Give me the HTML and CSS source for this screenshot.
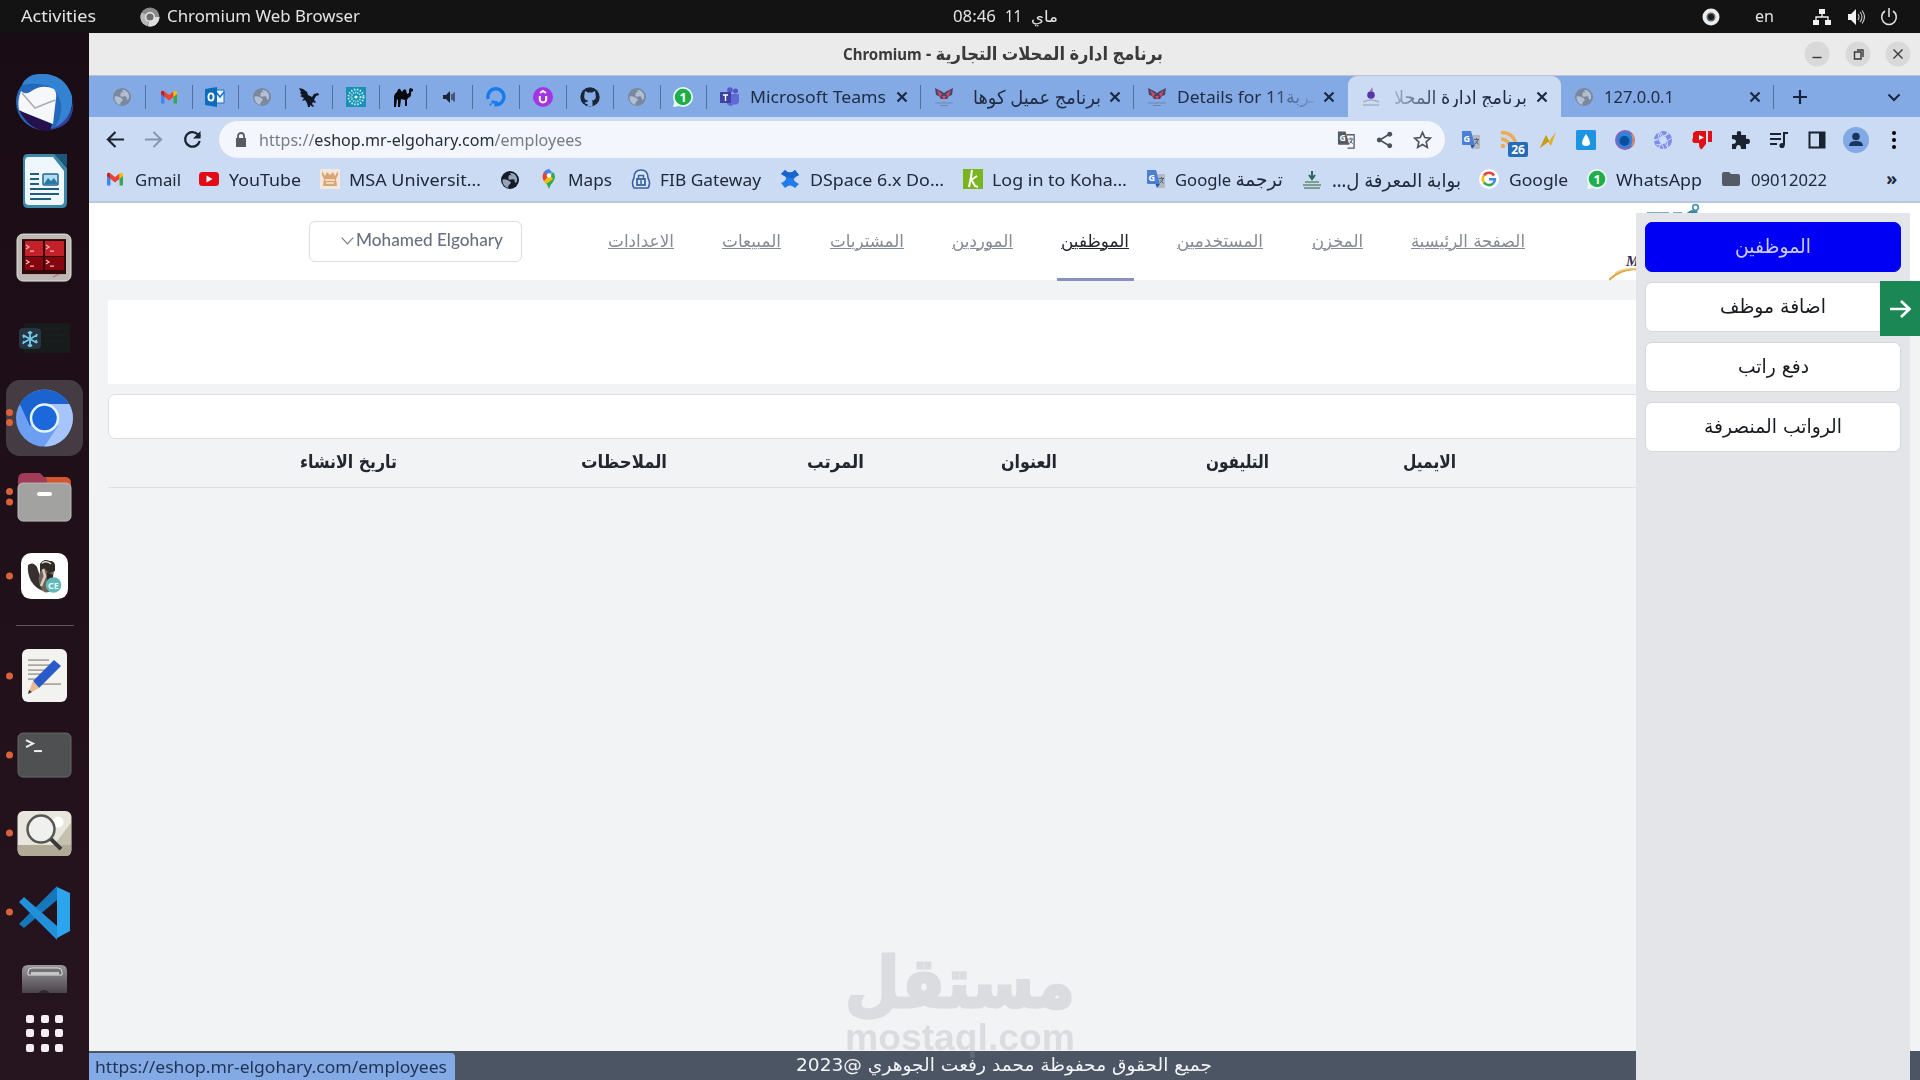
FILE: index.html
```html
<!DOCTYPE html>
<html lang="ar">
<head>
<meta charset="utf-8">
<title>برنامج ادارة المحلات التجارية</title>
<link rel="stylesheet" href="styles.css">
</head>
<body>
<svg class="defs" width="0" height="0">
  <defs>
    <symbol id="globe" viewBox="0 0 20 20"><circle cx="10" cy="10" r="9" fill="currentColor"/><path d="M2.500 9.500q3-.5 5 .5t3 2-1 2.500-1 3.500Q2 16 2.500 9.500zM10 3q5-.5 7 5 .5 3-1 5-1.500-.5-1.500-2.500T11 9.500 8.500 7 11 5.500 10 3z" fill="#c3d1e8" opacity=".75"/></symbol>
    <symbol id="gmail" viewBox="0 0 20 20"><path d="M2 16.500V6h3.500v10.500z" fill="#4285f4"/><path d="M14.500 16.500V6H18v10.500z" fill="#34a853"/><path d="M5.500 10V4.500L10 8l4.500-3.500V10L10 13.500z" fill="#ea4335"/><path d="M2 7V5.500C2 3.500 4 3 5.500 4.500V10z" fill="#c5221f"/><path d="M18 7V5.500c0-2-2-2.500-3.500-1V10z" fill="#fbbc04"/></symbol>
    <symbol id="whats" viewBox="0 0 20 20"><circle cx="10" cy="10" r="10" fill="#e8fbef"/><path d="M0 20l1.500-6 5 5z" fill="#e8fbef"/><circle cx="10" cy="10" r="8.300" fill="#1fae4b"/><text x="10" y="14.500" font-size="12.500" font-weight="700" text-anchor="middle" fill="#fff">1</text></symbol>
    <symbol id="fox" viewBox="0 0 20 20"><path d="M1 1l6 3 3 2 3-2 6-3-1 7-3 1-2 3H7L5 9 2 8z" fill="#4d4468"/><path d="M3 3l5 4-2 3zM17 3l-5 4 2 3zM8 9h4l-2 4z" fill="#e0485b"/><path d="M1 16h18M6 18.500h8" stroke="#7583a0" stroke-width="1"/></symbol>
    <symbol id="translate" viewBox="0 0 20 20"><path d="M8 5h10q1 0 1 1v12q0 1-1 1h-6z" fill="#b3b9c2"/><path d="M1 1h9l4 14H2q-1 0-1-1z" fill="#4a7fd6"/><path d="M9.500 15H14l-3 4z" fill="#2a56a8"/><text x="2.500" y="11.500" font-size="9" font-weight="700" fill="#fff">G</text><path d="M13 9.500h5M15.500 8v1.500M17 9.500q-.5 3-3 4.500M14.500 11l3 3.500" stroke="#566070" fill="none"/></symbol>
    <symbol id="x" viewBox="0 0 14 14"><path d="M2.500 2.500l9 9M11.500 2.500l-9 9" stroke="#1d2940" stroke-width="2.200"/></symbol>
  </defs>
</svg>

<header class="topbar">
  <span class="fit act" data-w="75">Activities</span>
  <svg class="i20" viewBox="0 0 20 20"><circle cx="10" cy="10" r="9.500" fill="#8b8b8b"/><path d="M1.500 5.500L10 10l-3 9A9.500 9.500 0 0 1 1.500 5.500z" fill="#b8b8b8"/><path d="M10 10h9.500A9.500 9.500 0 0 1 8 19.300z" fill="#dedede"/><circle cx="10" cy="10" r="4.300" fill="#6c6c6c" stroke="#e9e9e9" stroke-width="1.400"/></svg>
  <span class="fit app" data-w="193">Chromium Web Browser</span>
  <span class="clock"><span class="fit" data-w="43">08:46</span><span class="fit" data-w="17">11</span><span class="fit" data-w="27">ماي</span></span>
  <svg class="rec" viewBox="0 0 18 18"><circle cx="9" cy="9" r="8.500" fill="#ececec"/><circle cx="9" cy="9" r="4.500" fill="#5e6870"/><circle cx="9" cy="9" r="3" fill="#141d22"/></svg>
  <span class="fit lang" data-w="19">en</span>
  <svg class="net" viewBox="0 0 18 18"><path d="M6 1h6v5H6zM0 12h6v5H0zM12 12h6v5h-6z" fill="#f1f1f1"/><path d="M9 6v3M3 12V9h12v3" stroke="#f1f1f1" stroke-width="1.300" fill="none"/></svg>
  <svg class="vol" viewBox="0 0 18 18"><path d="M1 6h3l5-5v16l-5-5H1z" fill="#f1f1f1"/><path d="M11 6q2 3 0 6M13 4q4 5 0 10M15 2.500q5 6.500 0 13" stroke="#c9c9c9" fill="none" stroke-width="1.100"/></svg>
  <svg class="pow" viewBox="0 0 18 18"><path d="M5 3a7.300 7.300 0 1 0 8 0M9 0v9" stroke="#e6e6e6" fill="none" stroke-width="1.500"/></svg>
</header>

<div class="desk">
<aside class="dock">
  <svg viewBox="0 0 89 79"><circle cx="44" cy="41" r="28" fill="#2468bb"/><path d="M22 24q4-10 16-11 26-2 34 22 2 22-18 33 12-18 4-34-8-15-36-10z" fill="#3383d2"/><path d="M49 69q24-9 24-31 3 28-24 31z" fill="#363f9f"/><path d="M19 49l9 4 24 10-2 7q-20 1-31-21z" fill="#25104b"/><path d="M21 30q4 4 9 1 12-9 24-3 3 4 2 9l-3 26-30-12-4-2q-2-9 2-19z" fill="#f5f7f8"/><path d="M22 32l13 15 20-8" fill="none" stroke="#a9acb4" stroke-width="1.500"/></svg>
  <svg viewBox="0 0 89 79"><path d="M28 14h27l12 14v35q0 5-5 5H28q-5 0-5-5V19q0-5 5-5z" fill="#3d87a8"/><path d="M29 17h24l11 14v30q0 4-4 4H29q-4 0-4-4V21q0-4 4-4z" fill="#eef7fb"/><path d="M54 14h13v13z" fill="#1c5779"/><path d="M30 34h9M30 39h9M30 44h9M30 49h29M30 54h29M30 59h21" stroke="#205d7e" stroke-width="2"/><rect x="43" y="34" width="15" height="11" rx="1" fill="#b2dcef" stroke="#27658a" stroke-width="1.500"/><path d="M44 44l4-6 3 3 3-3 4 6z" fill="#2a77a4"/></svg>
  <svg viewBox="0 0 89 79"><rect x="17" y="15" width="54" height="47" rx="6" fill="#bdbab5" stroke="#e1dfda"/><rect x="22" y="20" width="44" height="35" fill="#320a0d"/><path d="M25 22h18v15H25zM45 22h19v15H45z" fill="#c3202a"/><path d="M25 38h18v13H25zM45 38h19v13H45z" fill="#85060d"/><path d="M26 26l3 2-3 2m4 2h4M46 26l3 2-3 2m4 2h4M26 41l3 2-3 2m4 2h4M46 41l3 2-3 2m4 2h4" stroke="#e9b9b9" stroke-width="1.300" fill="none"/><path d="M53 58l6-3" stroke="#d4545c"/></svg>
  <svg viewBox="0 0 89 79"><rect x="24" y="25" width="46" height="30" fill="#171b1c"/><path d="M44 31h17M44 37h22M44 43h18" stroke="#202424"/><rect x="19" y="30" width="22" height="21" rx="4" fill="#253542"/><path d="M30 33v16M23 37l14 8M23 45l14-8M28 34l2 2 2-2M28 48l2-2 2 2M24 40l-1-3M36 42l1 3M24 43l-1 3M36 39l1-3" stroke="#71c6e7" stroke-width="1.800" fill="none"/></svg>
  <svg viewBox="0 0 89 79"><rect x="6" y="2" width="77" height="76" rx="14" fill="#443c42"/><circle cx="44.500" cy="40" r="28.500" fill="#6c9ff2"/><path d="M19.800 26A28.500 28.500 0 0 1 69.200 26H44.500L30 48z" fill="#1b63cf"/><path d="M44.500 26h24.700A28.500 28.500 0 0 1 44.500 68.500L58 48z" fill="#a7c5fb"/><circle cx="44.500" cy="40" r="13.500" fill="#1b68dc" stroke="#e2f3fd" stroke-width="2.500"/><g class="dot"><circle cx="9.500" cy="34.500" r="3.500"/><circle cx="9.500" cy="44.500" r="3.500"/></g></svg>
  <svg viewBox="0 0 89 79"><path d="M18 23q0-7 6-7h16l4 4h21q6 0 6 7v20H18z" fill="#a23b55"/><path d="M46 20h19q6 0 6 7v10H50z" fill="#d5552d"/><rect x="18" y="26" width="53" height="38" rx="5" fill="#a2a2a1" stroke="#bbb"/><path d="M39 37h11" stroke="#fff" stroke-width="4" stroke-linecap="round"/><g class="dot"><circle cx="9.500" cy="34.500" r="3.500"/><circle cx="9.500" cy="45" r="3.500"/></g></svg>
  <svg viewBox="0 0 89 79"><rect x="21" y="17" width="47" height="46" rx="10" fill="#fefefe"/><path d="M28 29q5-4 9 2l4 12 3 12q-8-2-13-10-4-8-3-16z" fill="#38302f"/><path d="M42 26q8-4 13 3l-2 12-2 14q-7 4-10-3-4-8-1-16z" fill="#6e6156"/><path d="M40 28q4-6 9-3 5-1 6 4v6l-6 2-5-5-4 4z" fill="#312b28"/><path d="M47 36l6 3v10l-6 5z" fill="#2e2725"/><path d="M43 33l2 7-4 10" stroke="#dccabe" stroke-width="2.500" fill="none"/><path d="M42 27q5-3 9 1" stroke="#e8ddd4" stroke-width="1.500" fill="none"/><circle cx="53.500" cy="49" r="7.800" fill="#64b8ba"/><text x="53.500" y="52.500" font-size="9" font-weight="700" text-anchor="middle" fill="#e1ffff">CE</text><g class="dot"><circle cx="9.500" cy="40" r="3.500"/></g></svg>
  <hr>
  <svg viewBox="0 0 89 79"><rect x="22" y="13" width="45" height="53" rx="6" fill="#f2f2f1"/><path d="M28 24h21M28 29h27M28 34h27M28 38h20M28 43h15M40 48h21" stroke="#aaa79d" stroke-width="1.700"/><path d="M54 24l7 6-22 22-6-7z" fill="#2a59c9"/><path d="M33 45l6 7-11 6z" fill="#eab98d"/><path d="M29 54l3 2-4 2z" fill="#333"/><g class="dot"><circle cx="9.500" cy="40" r="3.500"/></g></svg>
  <svg viewBox="0 0 89 79"><rect x="18" y="18" width="53" height="44" rx="5" fill="#4e5051" stroke="#676767"/><path d="M26 25l7 3.500-7 3.500" stroke="#eee" stroke-width="2" fill="none"/><path d="M34 36h8" stroke="#eee" stroke-width="2"/><g class="dot"><circle cx="9.500" cy="40" r="3.500"/></g></svg>
  <svg viewBox="0 0 89 79"><rect x="17.500" y="17" width="54" height="45" rx="6" fill="#e7e5dc"/><path d="M71 29L54 51h17z" fill="#c4c1b0"/><path d="M18 51h53v6q0 5-5 5H23q-5 0-5-5z" fill="#b1aa96"/><circle cx="58" cy="28" r="5.500" fill="#fff"/><circle cx="41" cy="35" r="13.500" fill="#f0f0ee" stroke="#575753" stroke-width="2.500"/><path d="M51 45l10 10" stroke="#393936" stroke-width="4"/><g class="dot"><circle cx="9.500" cy="39" r="3.500"/></g></svg>
  <svg viewBox="0 0 89 79"><path d="M19 51l38-38v14L24 55z" fill="#1478ba"/><path d="M19 29l5-5 33 29v14z" fill="#2190d8"/><path d="M57 14l13 6v38l-13 7z" fill="#2da5ee"/><g class="dot"><circle cx="9.500" cy="39" r="3.500"/></g></svg>
  <svg class="trash" viewBox="0 0 89 41"><defs><linearGradient id="tg" x2="0" y2="1"><stop stop-color="#9b999c"/><stop offset="1" stop-color="#4b434b"/></linearGradient></defs><path d="M22 40V18q0-6 6-6h33q6 0 6 6v22z" fill="url(#tg)"/><path d="M28 22v-3q0-4 4-4h26q4 0 4 4v3z" fill="#737274" stroke="#ddd"/><path d="M31 19h28v3H31z" fill="#c5c5c5"/><path d="M38 40q6-6 12 0z" fill="#312a31"/></svg>
  <div class="grid"><i></i><i></i><i></i><i></i><i></i><i></i><i></i><i></i><i></i></div>
</aside>

<main class="window">
  <div class="title"><b class="fit" data-w="320" dir="rtl">برنامج ادارة المحلات التجارية - <span>Chromium</span></b>
    <div class="wbtns">
      <svg viewBox="0 0 26 26"><circle cx="13" cy="13" r="12.500"/><path d="M8.500 16.500h9"/></svg>
      <svg viewBox="0 0 26 26"><circle cx="13" cy="13" r="12.500"/><path d="M9.500 11h6.500v7H9.500zM12 9h6v7"/></svg>
      <svg viewBox="0 0 26 26"><circle cx="13" cy="13" r="12.500"/><path d="M8.500 8.500l9 9M17.500 8.500l-9 9" stroke-width="1.800"/></svg>
    </div>
  </div>

  <div class="tabs">
    <div class="pin gray"><svg><use href="#globe"/></svg></div>
    <div class="pin"><svg><use href="#gmail"/></svg></div>
    <div class="pin"><svg viewBox="0 0 20 20"><path d="M11 3h8v13h-8z" fill="#e8f2fd" stroke="#1470c4"/><path d="M11 5l4 5 4-5" fill="none" stroke="#1470c4" stroke-width="1.500"/><path d="M0 2l12-2v20L0 18z" fill="#0f6cbd"/><ellipse cx="6" cy="10" rx="2.600" ry="3.600" fill="none" stroke="#fff" stroke-width="1.800"/></svg></div>
    <div class="pin gray"><svg><use href="#globe"/></svg></div>
    <div class="pin"><svg viewBox="0 0 20 20"><path d="M0 1l4 1 4 3 1 3 4 2 2-3 4-1 1 2-3 1-2 4 2 2-1 1-2-1-1 2 2 2-1 1-3-2v2h-2l-1-4-2-3-3 1 2-3-4-2 2-1-2-2 1-1z" fill="#101725"/></svg></div>
    <div class="pin"><svg viewBox="0 0 20 20"><rect width="20" height="20" fill="#1a91b4"/><circle cx="10" cy="10" r="7.500" fill="none" stroke="#bcf0f5" stroke-width="2" stroke-dasharray="1.500 1.500"/><circle cx="10" cy="10" r="4.500" fill="none" stroke="#bcf0f5" stroke-width="2" stroke-dasharray="1 1.200"/><circle cx="10" cy="10" r="1.600" fill="#e6ffff"/></svg></div>
    <div class="pin"><svg viewBox="0 0 20 20"><path d="M1 9q1-3 3-4 1-4 3-3l2 3q2-4 4-2l1 4 2-1V3l1-2 3 1v2l-2 1q1 5-3 6l-1 2v6h-2v-6l-4-1-1 8H5v-7l-1-1-1 8H1v-7z" fill="#05080c"/></svg></div>
    <div class="pin"><svg viewBox="0 0 20 20"><path d="M4 8h3l4-4v12l-4-4H4z" fill="#1a2435"/><path d="M13 7v6M15 5.500v9" stroke="#1a2435" stroke-width="1.200"/></svg></div>
    <div class="pin"><svg viewBox="0 0 20 20"><path d="M2.200 12A8 8 0 1 1 10 17.800V14" fill="none" stroke="#167bee" stroke-width="3.400"/><path d="M5.500 13.500h3v3h-3zM3.500 16.500h2v2h-2z" fill="#167bee"/></svg></div>
    <div class="pin"><svg viewBox="0 0 20 20"><circle cx="10" cy="10" r="10" fill="#a435e2"/><path d="M6.800 9v3.500a3.200 3 0 0 0 6.400 0V9M7 6l3-2 3 2" fill="none" stroke="#fff" stroke-width="2"/></svg></div>
    <div class="pin"><svg viewBox="0 0 20 20"><circle cx="10" cy="10" r="9.700" fill="#182638"/><path d="M5 4l3 1.500h4L15 4l.5 3q1.500 6-3.500 6.500l.5 1.500v4.500h-5V17q-2 .5-3-1.500 2 0 3-1l.5-1Q3 13 4.500 7z" fill="#86ace7"/></svg></div>
    <div class="pin gray"><svg><use href="#globe"/></svg></div>
    <div class="pin"><svg><use href="#whats"/></svg></div>
    <div class="tab"><svg viewBox="0 0 20 20"><circle cx="15.500" cy="4" r="2.500" fill="#5157bd"/><circle cx="10" cy="3" r="2.800" fill="#565cc6"/><path d="M8 7h11v8q-2 4-5 2-3 4-7 0z" fill="#6269d6"/><rect y="5" width="11" height="11" fill="#3c43a4"/><path d="M3 8h5M5.500 8v6" stroke="#fff" stroke-width="1.400"/></svg><span class="txt"><span class="fit" data-w="136">Microsoft Teams</span></span><svg class="cl"><use href="#x"/></svg></div>
    <div class="tab"><svg><use href="#fox"/></svg><span class="txt end"><span class="fit big" data-w="128" dir="rtl">برنامج عميل كوها</span></span><svg class="cl"><use href="#x"/></svg></div>
    <div class="tab nosep"><svg><use href="#fox"/></svg><span class="txt fr"><span class="fit" data-w="138">Details for 11ـربة</span></span><svg class="cl"><use href="#x"/></svg></div>
    <div class="tab active"><svg viewBox="0 0 20 20"><circle cx="10" cy="8" r="3.800" fill="#5438a8"/><path d="M9 4l2-4 1 4" fill="#b46ba5"/><path d="M2 15q8-4 16 0M2 18h16" stroke="#aab0c3" stroke-width="1.500" fill="none"/></svg><span class="txt fl"><span class="fit big" data-w="133" dir="rtl">برنامج ادارة المحلا</span></span><svg class="cl"><use href="#x"/></svg></div>
    <div class="tab gray"><svg><use href="#globe"/></svg><span class="txt"><span class="fit" data-w="70">127.0.0.1</span></span><svg class="cl"><use href="#x"/></svg></div>
    <svg class="plus" viewBox="0 0 16 16"><path d="M8 1v14M1 8h14" stroke="#18243a" stroke-width="2.200"/></svg>
    <svg class="down" viewBox="0 0 14 14"><path d="M1.500 4.500L7 10l5.500-5.500" fill="none" stroke="#18243a" stroke-width="2"/></svg>
  </div>

  <div class="toolbar">
    <svg class="nv" viewBox="0 0 20 20"><path d="M19 10H2.500M10 2l-8 8 8 8" fill="none" stroke="#1d2430" stroke-width="2.300"/></svg>
    <svg class="nv" viewBox="0 0 20 20"><path d="M1 10h16.500M10 2l8 8-8 8" fill="none" stroke="#8794ab" stroke-width="2.100"/></svg>
    <svg class="nv" viewBox="0 0 20 20"><path d="M17.500 11.500a7.700 7.700 0 1 1-2-7L18 7" fill="none" stroke="#1d2430" stroke-width="2.400"/><path d="M18.500 1v8h-8z" fill="#1d2430"/></svg>
    <div class="omni">
      <svg class="lock" viewBox="0 0 12 16"><path d="M1 6h10v9H1z" fill="#555c66"/><path d="M3 6V4a3 3 0 0 1 6 0v2" fill="none" stroke="#555c66" stroke-width="1.800"/></svg>
      <span class="fit url" data-w="323"><i>https://</i>eshop.mr-elgohary.com<i>/employees</i></span>
      <svg class="o1" viewBox="0 0 20 20"><path d="M10 4.500h8v14h-7" fill="none" stroke="#555c66" stroke-width="1.400"/><path d="M1 1h8l4 14H2q-1 0-1-1z" fill="#555c66"/><text x="2.500" y="11.500" font-size="9" font-weight="700" fill="#fff">G</text><path d="M12 9h5M14.500 7.500V9M16 9q-.5 3-3 5M13.500 11l3 3" stroke="#555c66" fill="none"/></svg>
      <svg viewBox="0 0 20 20"><path d="M15 4L5 10l10 6" fill="none" stroke="#4b525c" stroke-width="1.700"/><circle cx="15.500" cy="4" r="2.600" fill="#4b525c"/><circle cx="4.500" cy="10" r="2.600" fill="#4b525c"/><circle cx="15.500" cy="16" r="2.600" fill="#4b525c"/></svg>
      <svg viewBox="0 0 20 20"><path d="M10 2l2.400 5.400 5.900.6-4.400 4 1.200 5.800L10 14.800l-5.100 3L6.100 12 1.700 8l5.900-.6z" fill="none" stroke="#4b525c" stroke-width="1.700"/></svg>
    </div>
    <div class="ext">
      <svg><use href="#translate"/></svg>
      <span class="rss"><svg viewBox="0 0 20 20"><path d="M2 2.500q14 0 15.500 15M2 9q8 0 9 9" stroke="#edaa57" stroke-width="3.400" fill="none"/><circle cx="4" cy="16" r="2.200" fill="#edaa57"/></svg><b>26</b></span>
      <svg viewBox="0 0 20 20"><path d="M2 18L8 5l3 6 7-9-5 14-3-4z" fill="#e0b02b"/><path d="M8 5l3 6-1 1-8 6z" fill="#c89a1c"/></svg>
      <svg viewBox="0 0 20 20"><rect width="20" height="20" rx="1.500" fill="#1d94e2"/><path d="M10 4q8 12 0 12t0-12z" fill="#fff"/></svg>
      <svg viewBox="0 0 20 20"><circle cx="10" cy="10" r="9" fill="#2f83d8" stroke="#8764bd" stroke-width="2"/><circle cx="9.500" cy="11" r="5" fill="#0b4f9c"/><path d="M17 4q3 6 0 12" stroke="#e18869" stroke-width="2" fill="none"/></svg>
      <svg viewBox="0 0 20 20"><circle cx="10" cy="10" r="6.500" fill="none" stroke="#7f8de8" stroke-width="5" stroke-dasharray="5.800 1"/><path d="M7 1l3 5 6-2M19 8l-5 3 1 6M11 19l-2-5-6 1M1 11l5-3-1-5" fill="none" stroke="#cbdaf8"/></svg>
      <svg viewBox="0 0 20 20"><path d="M1 3l3-2h10v13l-4 5q-3 1-3-6H2q-3-2-1-5zM16 1h4v11h-4z" fill="#df1016"/><path d="M7 5l5 2.500L7 10z" fill="#fff"/></svg>
      <svg viewBox="0 0 20 20"><path d="M2 5h5q-1-4 2-4t2 4h5v4q4-1 4 2.200T16 14v5h-5q0-4-2.500-4T6 19H2v-5q4 0 4-2.500T2 9z" fill="#1b2230"/></svg>
      <svg viewBox="0 0 20 20"><path d="M1 4h11M1 9h11M1 14h7" stroke="#1b2230" stroke-width="2"/><path d="M15 15V3h4" fill="none" stroke="#1b2230" stroke-width="2"/><circle cx="13" cy="15.500" r="2.600" fill="#1b2230"/></svg>
      <svg viewBox="0 0 20 20"><path d="M2.500 2.500h15v15h-15z" fill="none" stroke="#1b2230" stroke-width="2"/><path d="M12 2h6v16h-6z" fill="#1b2230"/></svg>
      <svg class="ava" viewBox="0 0 26 26"><circle cx="13" cy="13" r="13" fill="#80a9e6"/><circle cx="13" cy="9.500" r="3.800" fill="#17375f"/><path d="M6 19q0-5 7-5t7 5z" fill="#17375f"/></svg>
      <svg viewBox="0 0 20 20"><circle cx="10" cy="3" r="2"/><circle cx="10" cy="10" r="2"/><circle cx="10" cy="17" r="2"/></svg>
    </div>
  </div>

  <div class="marks">
    <a><svg><use href="#gmail"/></svg><span class="fit" data-w="46">Gmail</span></a>
    <a><svg viewBox="0 0 20 20"><rect y="3" width="20" height="14" rx="3.500" fill="#e20b18"/><path d="M7.500 6.500l6 3.500-6 3.500z" fill="#fff"/></svg><span class="fit" data-w="72">YouTube</span></a>
    <a><svg viewBox="0 0 20 20"><rect width="20" height="20" fill="#f4e7db"/><path d="M2 2l3 5 2-4 3 3 3-3 2 4 3-5v4l-2 4 1 7H3l1-7-2-4z" fill="#d9a477"/><path d="M5 11h10M6 14h8" stroke="#f7e7d1" stroke-width="1.500"/></svg><span class="fit" data-w="132">MSA Universit…</span></a>
    <a class="black"><svg><use href="#globe"/></svg></a>
    <a><svg viewBox="0 0 20 20"><path d="M10 20Q8 15 5 12L14 3q4 4 0 10-3 3-4 7z" fill="#34a853"/><path d="M4 7q0-6 6-7l3 3-8 9z" fill="#4285f4"/><path d="M3.500 7q0 3 1.500 5l5-5-5-4z" fill="#ea4335"/><path d="M5 12l6-6 3 4-7 5z" fill="#fbbc04"/><circle cx="10" cy="6.500" r="2.300" fill="#fff"/></svg><span class="fit" data-w="44">Maps</span></a>
    <a><svg viewBox="0 0 20 20"><path d="M3 9q0-8 7-8t7 8q3 5 0 10H3Q0 14 3 9z" fill="#dbe8fa" stroke="#3b62a4" stroke-width="1.600"/><rect x="6" y="10" width="8" height="6" fill="none" stroke="#3b62a4" stroke-width="1.800"/><path d="M7.500 10V6.500h5V10M10 11v4" stroke="#3b62a4" stroke-width="1.500" fill="none"/></svg><span class="fit" data-w="101">FIB Gateway</span></a>
    <a><svg viewBox="0 0 20 20"><path d="M1 5l4-4q5 5 10 0l4 5q-4 2-5 4t5 5l-4 4q-5-5-10 0l-4-5q5-2 5-5T1 5z" fill="#237be9"/><path d="M5 1q5 5 10 0l4 5-7 3q-6 0-11-4z" fill="#1a62cd"/></svg><span class="fit" data-w="134">DSpace 6.x Do…</span></a>
    <a><svg viewBox="0 0 20 20"><rect width="20" height="20" fill="#78b51e"/><path d="M9 1l-1 7-2 10M8 11l6-4M8 10l4 7 3 1" stroke="#fff" stroke-width="2" fill="none"/></svg><span class="fit" data-w="135">Log in to Koha…</span></a>
    <a><svg><use href="#translate"/></svg><span class="fit" data-w="108">Google <span class="big">ترجمة</span></span></a>
    <a><svg viewBox="0 0 20 20"><path d="M10 1v8M7 5l3 4 3-4" stroke="#2d665a" stroke-width="2" fill="none"/><path d="M3 12h14M1 15h18M2 18h16" stroke="#7d9f91" stroke-width="2"/></svg><span class="fit big" data-w="129" dir="rtl">بوابة المعرفة ل…</span></a>
    <a><svg viewBox="0 0 20 20"><circle cx="10" cy="10" r="10" fill="#fff"/><path d="M15 6.500A6 6 0 0 0 5 6.500" stroke="#ea4335" stroke-width="2.600" fill="none"/><path d="M5 6.500a6 6 0 0 0 0 7" stroke="#fbbc04" stroke-width="2.600" fill="none"/><path d="M5 13.500a6 6 0 0 0 9 1" stroke="#34a853" stroke-width="2.600" fill="none"/><path d="M10 10.300h6q0 2.500-2 4.200" stroke="#4285f4" stroke-width="2.500" fill="none"/></svg><span class="fit" data-w="59">Google</span></a>
    <a><svg><use href="#whats"/></svg><span class="fit" data-w="86">WhatsApp</span></a>
    <a><svg viewBox="0 0 20 20"><path d="M1 5q0-2 2-2h5l2 2h7q2 0 2 2v8q0 2-2 2H3q-2 0-2-2z" fill="#535c66"/></svg><span class="fit" data-w="76">09012022</span></a>
    <b class="more">»</b>
  </div>

  <section class="page">
    <div class="site-head">
      <nav dir="rtl">
        <a class="fit" data-w="114">الصفحة الرئيسية</a><a class="fit" data-w="51">المخزن</a><a class="fit" data-w="86">المستخدمين</a><div class="on"><a class="fit" data-w="68">الموظفين</a></div><a class="fit" data-w="61">الموردين</a><a class="fit" data-w="74">المشتريات</a><a class="fit" data-w="59">المبيعات</a><a class="fit" data-w="66">الاعدادات</a>
      </nav>
      <div class="user"><svg viewBox="0 0 13 8"><path d="M.7.7L6.500 6.800 12.300.7" fill="none" stroke="#737b88" stroke-width="1.200"/></svg><span class="fit" data-w="147">Mohamed Elgohary</span></div>
    </div>
    <div class="hero"></div>
    <div class="search"></div>
    <div class="thead">
      <span><b class="fit" data-w="97">تاريخ الانشاء</b></span><span><b class="fit" data-w="86">الملاحظات</b></span><span><b class="fit" data-w="57">المرتب</b></span><span><b class="fit" data-w="56">العنوان</b></span><span><b class="fit" data-w="63">التليفون</b></span><span><b class="fit" data-w="53">الايميل</b></span>
    </div>
    <footer><span class="fit" data-w="416" dir="rtl">جميع الحقوق محفوظة محمد رفعت الجوهري @2023</span></footer>

    <svg class="logo" viewBox="0 0 110 80"><path d="M38 10h22M64 10h9" stroke="#4e93ae" stroke-width="1.500"/><path d="M77 11q5-6 11-3l1 3z" fill="#3f819f"/><circle cx="86.500" cy="4.500" r="2.800" fill="none" stroke="#4399b4" stroke-width="1.700"/><text x="17" y="62.500" font-family="Liberation Serif" font-style="italic" font-weight="700" font-size="15" fill="#2b2950">M</text><path d="M0 77Q14 63 34 67" fill="none" stroke="#dcac48" stroke-width="2.200"/><path d="M6 70Q16 64 34 66" fill="none" stroke="#f0d391" stroke-width="1.300"/></svg>
    <div class="side">
      <button class="cur"><span class="fit" data-w="76">الموظفين</span></button>
      <button><span class="fit" data-w="106">اضافة موظف</span></button>
      <button><span class="fit" data-w="71">دفع راتب</span></button>
      <button><span class="fit" data-w="138">الرواتب المنصرفة</span></button>
    </div>
    <div class="toggle"><svg viewBox="0 0 22 20"><path d="M1 10h19M12 2l8.500 8-8.500 8" fill="none" stroke="#fff" stroke-width="2.700"/></svg></div>
    <div class="mark"><b class="fit ar" data-w="230">مستقل</b><b class="fit en" data-w="230">mostaql.com</b></div>
    <div class="status"><span class="fit" data-w="352">https://eshop.mr-elgohary.com/employees</span></div>
  </section>
</main>
</div>
<script src="fit.js"></script>
</body>
</html>
```
FILE: styles.css
```css
* { box-sizing: border-box; }
body { margin: 0; width: 1920px; height: 1080px; overflow: hidden; display: flex; flex-direction: column; font-family: "Noto Sans", "DejaVu Sans", sans-serif; font-size: 17px; line-height: 1; color: #202939; }
.defs { position: absolute; }
svg { display: block; flex: none; }
.fit { display: inline-block; flex: none; white-space: nowrap; transform-origin: 0 50%; line-height: 1.4; }
.big { font-size: 19px; line-height: 20px; }

/* system bar */
.topbar { height: 33px; flex: none; background: #131313; color: #e4e4e4; display: flex; align-items: center; font-size: 16px; padding-left: 21px; }
.i20 { width: 20px; height: 20px; margin-left: 44px; }
.app { margin-left: 7px; }
.clock { display: flex; gap: 9px; margin-left: 593px; width: 104px; white-space: nowrap; }
.rec { width: 18px; height: 18px; margin-left: 645px; }
.lang { margin-left: 35px; }
.net { width: 18px; height: 18px; margin-left: 39px; }
.vol { width: 18px; height: 18px; margin-left: 16px; }
.pow { width: 18px; height: 18px; margin-left: 15px; }

.desk { flex: 1; display: flex; min-height: 0; }

/* dock */
.dock { width: 89px; flex: none; background: linear-gradient(#1a0c14, #26141e); padding-top: 28px; display: flex; flex-direction: column; align-items: center; }
.dock svg { width: 89px; height: 79.150px; }
.dock hr { width: 58px; height: 1px; border: 0; background: #605860; margin: 10px 0; flex: none; }
.dock .trash { height: 41px; }
.dock .dot circle { fill: #d9623b; }
.grid { display: grid; grid-template-columns: repeat(3, 8px); gap: 6.500px; margin-top: 21px; }
.grid i { width: 8px; height: 8px; border-radius: 2px; background: #f4eef3; }

.window { flex: 1; min-width: 0; display: flex; flex-direction: column; }
.title { height: 43px; background: #ebebeb; border-bottom: 1px solid #bcc4d2; display: flex; align-items: center; color: #3b3b3b; font-size: 18px; padding-left: 754px; flex: none; }
.title span { font-size: 16.500px; }
.wbtns { display: flex; gap: 14.500px; margin-left: 641px; }
.wbtns svg { width: 26px; height: 26px; fill: #d9d9d9; }
.wbtns path { stroke: #393939; stroke-width: 1.400; fill: none; }

/* tab strip */
.tabs { height: 41px; flex: none; background: #84aae6; display: flex; align-items: center; padding-left: 10px; }
.pin, .tab { height: 24px; display: flex; align-items: center; border-right: 1.500px solid #5470a0; flex: none; }
.pin { width: 46.800px; justify-content: center; }
.pin svg, .tab svg, .marks svg { width: 20px; height: 20px; }
.gray { color: #7b879b; }
.black { color: #151c28; }
.tab { width: 213.400px; padding: 0 11px 0 13px; color: #202c43; }
.tab.gray svg:first-child { color: #7b879b; }
.tab .txt { flex: 1; margin: 0 7px 0 10px; display: flex; align-items: center; color: #202c43; }
.tab .end, .tab .fl { justify-content: flex-end; }
.tab .cl { width: 14px; height: 14px; }
.nosep, .active { border-right-color: transparent; }
.active { height: 41px; background: #cbdbf4; border-radius: 9px 9px 0 0; border-right: 0; }
.active .txt { margin-right: 8px; }
.active { padding-right: 12px; }
.fl { mask-image: linear-gradient(90deg, #0003, #000 40%); }
.fr { mask-image: linear-gradient(270deg, #0001, #000 35%); }
.plus { width: 16px; height: 16px; margin-left: 18px; }
.down { width: 14px; height: 14px; margin-left: 79px; }

/* toolbar */
.toolbar { height: 45px; flex: none; background: #cbdbf4; display: flex; align-items: center; padding-left: 16.500px; }
.nv { width: 19px; height: 19px; margin-right: 19.500px; }
.omni { width: 1226px; height: 37px; margin-left: -2.500px; border-radius: 19px; background: #f3f7fd; display: flex; align-items: center; gap: 19px; padding: 0 13px 0 16px; }
.lock { width: 12px; height: 16px; }
.url { color: #252e3c; margin-left: -7px; }
.url i { font-style: normal; color: #747c89; }
.omni svg:not(.lock) { width: 19px; height: 20px; }
.omni .o1 { margin-left: auto; }
.ext { display: flex; align-items: center; justify-content: space-between; width: 444px; margin-left: 16px; }
.ext > svg, .rss svg { width: 20px; height: 20px; }
.ext .ava { width: 26px; height: 26px; margin: 0 -3px; }
.rss { position: relative; width: 20px; }
.rss b { position: absolute; left: 9px; top: 12px; width: 20px; height: 15px; background: #266db9; color: #fff; font-size: 12px; line-height: 15px; text-align: center; border-radius: 2px; }

/* bookmarks */
.marks { height: 41px; flex: none; background: #cbdbf4; border-bottom: 2px solid #b9c8df; display: flex; align-items: center; gap: 18.800px; padding: 0 0 4px 16px; }
.marks a { display: flex; align-items: center; gap: 9.500px; flex: none; }
.more { font-size: 18px; margin-left: 41px; padding-bottom: 3px; }

/* page */
.page { flex: 1; position: relative; background: #f2f3f5; display: flex; flex-direction: column; overflow: hidden; font-family: "DejaVu Sans", sans-serif; }
.site-head { height: 77px; flex: none; background: #fff; display: flex; flex-direction: row-reverse; align-items: center; padding-right: 395px; gap: 86px; }
.site-head nav { display: flex; height: 77px; align-items: center; gap: 48.300px; font-size: 17.500px; color: #858b95; }
nav a { text-decoration: underline; text-decoration-thickness: 1px; }
nav .on { color: #20242b; align-self: stretch; display: flex; align-items: center; margin: 0 -4.500px -1px; padding: 2px 4.500px 0; border-bottom: 3px solid #8a8fc4; }
.user { width: 213px; height: 41px; border: 1.500px solid #dcdde1; border-radius: 6px; display: flex; align-items: center; gap: 2px; padding: 0 0 1px 31px; font: 500 16.500px Lato, sans-serif; color: #697180; }
.user svg { width: 13px; height: 8px; }
.hero { height: 84px; flex: none; margin: 20px 20px 10px 19px; background: #fff; }
.search { height: 45px; flex: none; margin: 0 20px 0 19px; background: #fff; border: 1px solid #dcdee1; border-radius: 7px; }
.thead { height: 49px; flex: none; margin: 0 20px 0 19px; border-bottom: 1.500px solid #dcdee1; padding: 0 0 2px 192px; display: grid; grid-template-columns: 281px 226px 194px 205px 197px 1fr; align-items: center; font-size: 18px; color: #22272f; }
footer { margin-top: auto; height: 29px; background: #4b5563; color: #f2f4f6; font-size: 18px; padding: 0 0 1px 707px; display: flex; align-items: center; }
.logo { position: absolute; left: 1520px; top: 0; width: 110px; height: 80px; }
.side { position: absolute; left: 1547px; top: 10px; bottom: 0; width: 274px; background: #e4e5e9; display: flex; flex-direction: column; gap: 10px; padding: 9px 9px 0; }
.side button { height: 50px; border: 1.500px solid #d6d7db; border-radius: 7px; background: #fff; color: #171a1f; display: flex; align-items: center; justify-content: center; font: 19.500px "DejaVu Sans", sans-serif; flex: none; }
.side .cur { background: #0000f4; border-color: #0000f4; color: #c9c9ff; }
.toggle { position: absolute; left: 1791px; top: 78px; width: 40px; height: 55px; background: #1b8755; display: flex; align-items: center; justify-content: center; }
.toggle svg { width: 22px; height: 20px; }
.mark { position: absolute; left: 756px; top: 742px; width: 230px; color: #999ca2; opacity: .25; display: flex; flex-direction: column; }
.mark .ar { font-size: 70px; line-height: 76px; height: 76px; align-self: flex-start; -webkit-text-stroke: 3px #999ca2; }
.mark .en { font-family: "Liberation Sans", sans-serif; font-size: 36px; line-height: 36px; align-self: flex-start; margin-top: -1px; }
.status { position: absolute; left: 0; bottom: 0; width: 366px; height: 27px; background: #84aae6; border-top-right-radius: 4px; padding-left: 6px; display: flex; align-items: center; font-family: "Noto Sans", sans-serif; color: #1f3354; }
```
FILE: fit.js
```js
document.querySelectorAll('.fit').forEach(function (el) {
  var w = +el.dataset.w;
  var n = el.getBoundingClientRect().width;
  el.style.transform = 'scaleX(' + w / n + ')';
  el.style.marginRight = (w - n) + 'px';
});
```
